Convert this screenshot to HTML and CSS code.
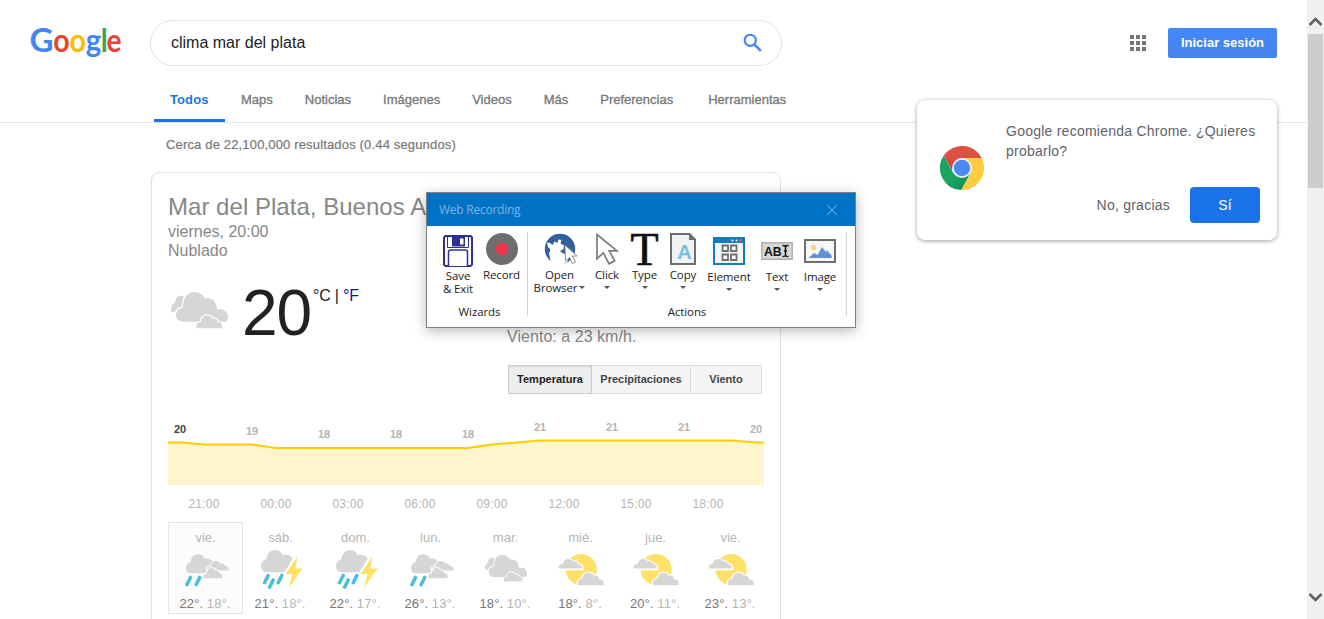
FILE: index.html
```
<!DOCTYPE html>
<html lang="es">
<head>
<meta charset="utf-8">
<title>clima mar del plata</title>
<link rel="stylesheet" href="styles.css">
</head>
<body>
<svg class="defs" width="0" height="0">
  <defs>
    <path id="cloud-big" d="M11 30.800a6.500 6.500 0 0 1-6-7c0-3.500 2.500-6.500 7-7.300C12 7 16.500 1 23 1c6 0 9.500 3 11 6.500 6.500-1 12 3.500 12 11 6-1.200 11 1.500 11 7.500 0 3-1 4.800-2.500 4.800z"/>
    <path id="cloud-small" d="M1 13.200C-.5 12 0 7 4.800 7 5.500 2.500 8 .5 10.800.5c2.700 0 4.600 1.300 5.400 3.200 3-1 5.500 1 5.600 3.700 3.200-.5 5 2 4.200 5.800z"/>
    <path id="cloud-rain" d="M3.500 19.500C1 18.500 0 16.500 0 14.300c0-3.300 2-5.500 4.800-6.200C5 3.500 8 0 12.300 0c3.900 0 6 2.300 6.700 4.600 4-1 7.600.2 8.800 3.200L20.500 19.500z"/>
    <path id="drop" d="M6 1.500 2.400 8.700"/>
    <symbol id="cloudy" viewBox="0 0 57 38">
      <path d="M.5 21.500C-.8 16 1 13 4 11.500 4.200 6.500 7.500 4 12.500 5L11 18z"/>
      <use href="#cloud-big" class="halo"/>
      <use href="#cloud-big"/>
      <use href="#cloud-small" class="halo" transform="translate(25 24)"/>
      <use href="#cloud-small" transform="translate(25 24)"/>
    </symbol>
    <symbol id="rain" viewBox="0 0 48 42">
      <use href="#cloud-rain" transform="translate(5 5.300) scale(.97)"/>
      <use href="#cloud-small" class="halo" transform="translate(25.500 11.700) scale(.85 .75)"/>
      <use href="#cloud-small" transform="translate(25.500 11.700) scale(.85 .75)"/>
      <use href="#cloud-small" class="halo" transform="translate(22.300 18.500) scale(.74 .82)"/>
      <use href="#cloud-small" transform="translate(22.300 18.500) scale(.74 .82)"/>
      <use href="#drop" class="drop" x="3.500" y="27"/><use href="#drop" class="drop" x="12.700" y="27"/>
    </symbol>
    <symbol id="storm" viewBox="0 0 48 42">
      <use href="#cloud-rain" transform="translate(5 1) scale(1.14)"/>
      <path class="bolt-halo" d="M41.500 7 29.500 25h7l-4 14.500 14-20H39.500z"/>
      <path class="bolt" d="M41.500 7 29.500 25h7l-4 14.500 14-20H39.500z"/>
      <use href="#drop" class="drop" x="6.200" y="25"/><use href="#drop" class="drop" x="11.200" y="29.500"/><use href="#drop" class="drop" x="19.800" y="25"/>
    </symbol>
    <symbol id="mostly" viewBox="0 0 48 42">
      <use href="#cloudy" x="4" y="5.200" width="42" height="28"/>
    </symbol>
    <symbol id="partly" viewBox="0 0 48 42">
      <circle class="sun" cx="25.200" cy="20.500" r="15.500"/>
      <path class="cover" d="M0 17h25.500c1.800 0 2.200 1.500 2 2.500v1.800H0z"/>
      <use href="#cloud-small" class="halo" transform="translate(2.300 9.700) scale(.9 .74)"/>
      <use href="#cloud-small" transform="translate(2.300 9.700) scale(.9 .74)"/>
      <use href="#cloud-small" class="halo" transform="translate(21.500 23.200) scale(1 .98)"/>
      <use href="#cloud-small" transform="translate(21.500 23.200) scale(1 .98)"/>
    </symbol>
  </defs>
</svg>

<div class="window">
  <div class="page">
    <header class="header">
      <svg class="logo" width="96" height="36" viewBox="0 0 96 36"><text class="blue" x=".500" y="28" textLength="24" lengthAdjust="spacingAndGlyphs">G</text><text class="red" x="24.200" y="28" textLength="16.500" lengthAdjust="spacingAndGlyphs">o</text><text class="yellow" x="40.400" y="28" textLength="16.500" lengthAdjust="spacingAndGlyphs">o</text><text class="blue" x="56.700" y="28" textLength="15.500" lengthAdjust="spacingAndGlyphs">g</text><text class="green" x="71.800" y="28" textLength="7" lengthAdjust="spacingAndGlyphs">l</text><text class="red" x="77.600" y="28" textLength="15" lengthAdjust="spacingAndGlyphs">e</text></svg>
      <div class="search">
        <span class="query">clima mar del plata</span>
        <svg width="20" height="20" viewBox="0 0 20 20" fill="none" stroke="#4285f4"><circle cx="7.300" cy="7.300" r="5.600" stroke-width="2.100"/><path d="m11.300 11.300 6.500 6.500" stroke-width="2.600"/></svg>
      </div>
      <svg class="apps" width="16" height="16" viewBox="0 0 16 16" fill="#757575"><path d="M0 0h4v4H0zM6 0h4v4H6zM12 0h4v4h-4zM0 6h4v4H0zM6 6h4v4H6zM12 6h4v4h-4zM0 12h4v4H0zM6 12h4v4H6zM12 12h4v4h-4z"/></svg>
      <span class="signin">Iniciar sesión</span>
    </header>
    <nav class="tabs">
      <span class="tab active">Todos</span><span class="tab">Maps</span><span class="tab">Noticias</span><span class="tab">Imágenes</span><span class="tab">Videos</span><span class="tab">Más</span><span class="tab">Preferencias</span><span class="tab tools">Herramientas</span>
    </nav>
    <p class="stats">Cerca de 22,100,000 resultados (0.44 segundos)</p>
    <section class="card">
      <h1>Mar del Plata, Buenos Aires</h1>
      <p class="sub">viernes, 20:00</p>
      <p class="sub">Nublado</p>
      <div class="now">
        <svg class="now-icon wx" width="57" height="38"><use href="#cloudy" width="57" height="38"/></svg>
        <span class="temp">20</span>
        <span class="units">°C | <span class="link">°F</span></span>
        <span class="wind">Viento: a 23 km/h.</span>
      </div>
      <div class="modes"><span class="mode on">Temperatura</span><span class="mode precip">Precipitaciones</span><span class="mode wind-mode">Viento</span></div>
      <svg class="chart" width="596" height="100" viewBox="0 0 596 100">
        <path class="area" d="M0 27.500h13l24 2h47l24 3.500h192l24-3.500 48-4h192l24 2h8V70H0z"/>
        <path class="line" d="M0 27.500h13l24 2h47l24 3.500h192l24-3.500 48-4h192l24 2h8"/>
        <g class="values"><text class="first" x="12" y="18">20</text><text x="84" y="20">19</text><text x="156" y="23">18</text><text x="228" y="23">18</text><text x="300" y="23">18</text><text x="372" y="16">21</text><text x="444" y="16">21</text><text x="516" y="16">21</text><text x="588" y="18">20</text></g>
        <g class="hours"><text x="36" y="93">21:00</text><text x="108" y="93">00:00</text><text x="180" y="93">03:00</text><text x="252" y="93">06:00</text><text x="324" y="93">09:00</text><text x="396" y="93">12:00</text><text x="468" y="93">15:00</text><text x="540" y="93">18:00</text></g>
      </svg>
      <div class="days">
        <div class="day selected"><span>vie.</span><svg class="wx" width="48" height="42"><use href="#rain"/></svg><p><b>22°.</b> 18°.</p></div>
        <div class="day"><span>sáb.</span><svg class="wx" width="48" height="42"><use href="#storm"/></svg><p><b>21°.</b> 18°.</p></div>
        <div class="day"><span>dom.</span><svg class="wx" width="48" height="42"><use href="#storm"/></svg><p><b>22°.</b> 17°.</p></div>
        <div class="day"><span>lun.</span><svg class="wx" width="48" height="42"><use href="#rain"/></svg><p><b>26°.</b> 13°.</p></div>
        <div class="day"><span>mar.</span><svg class="wx" width="48" height="42"><use href="#mostly"/></svg><p><b>18°.</b> 10°.</p></div>
        <div class="day"><span>mié.</span><svg class="wx" width="48" height="42"><use href="#partly"/></svg><p><b>18°.</b> 8°.</p></div>
        <div class="day"><span>jue.</span><svg class="wx" width="48" height="42"><use href="#partly"/></svg><p><b>20°.</b> 11°.</p></div>
        <div class="day"><span>vie.</span><svg class="wx" width="48" height="42"><use href="#partly"/></svg><p><b>23°.</b> 13°.</p></div>
      </div>
    </section>
  </div>
  <div class="scrollbar">
    <svg width="17" height="34" viewBox="0 0 17 34"><path d="M2.500 25 8.500 19l6 6" fill="none" stroke="#606060" stroke-width="2.600"/></svg>
    <div class="thumb"></div>
    <svg class="down" width="17" height="34" viewBox="0 0 17 34"><path d="m2.500 9 6 6 6-6" fill="none" stroke="#606060" stroke-width="2.600"/></svg>
  </div>
</div>

<aside class="promo">
  <svg class="chrome" width="44" height="44" viewBox="0 0 44 44">
    <defs>
      <linearGradient id="shade-g" x1="0" y1="0" x2="1" y2="1"><stop offset=".5" stop-color="#1da462"/><stop offset="1" stop-color="#0f8a4c"/></linearGradient>
      <linearGradient id="shade-r" x1="0" y1="1" x2=".6" y2="0"><stop offset="0" stop-color="#b53a30"/><stop offset=".45" stop-color="#dd5144"/></linearGradient>
    </defs>
    <path d="M22 12h19.600A22 22 0 0 1 21.200 44l10-17z" fill="#ffcd42"/>
    <path d="M3.800 9.600 13.400 27 30.600 27 21.200 44A22 22 0 0 1 3.800 9.600z" fill="url(#shade-g)"/>
    <path d="M3.800 9.600A22 22 0 0 1 41.600 12H22L12 24z" fill="url(#shade-r)"/>
    <circle cx="22" cy="22" r="10" fill="#f1f1f1"/><circle cx="22" cy="22" r="8.200" fill="#4a8af4"/>
  </svg>
  <div class="promo-body">
    <p>Google recomienda Chrome. ¿Quieres probarlo?</p>
    <div class="promo-actions"><span class="no">No, gracias</span><span class="yes">Sí</span></div>
  </div>
</aside>

<div class="dialog">
  <div class="titlebar"><span>Web Recording</span><svg width="12" height="12" viewBox="0 0 12 12"><path d="m.8.8 10.400 10.400M11.200.8.8 11.200" stroke="#7fb8e3" fill="none"/></svg></div>
  <div class="ribbon">
    <div class="group wizards">
      <div class="tools-row">
        <div class="tool save low"><svg width="30" height="32" viewBox="0 0 30 32"><path d="M1 2.500 2.500 1h25L29 2.500v27L27.500 31h-25L1 29.500z" fill="#fff" stroke="#2e3192" stroke-width="2"/><path d="M4.500 2v10.500h21V2" fill="none" stroke="#2e3192" stroke-width="1"/><path d="M9 1h13v10.500H9z" fill="#2e3192"/><path d="M17 3.500h3.500v6H17z" fill="#fff"/><path d="M5.500 31V17q0-2 2-2h15q2 0 2 2v14" fill="#fff" stroke="#2e3192" stroke-width="1.500"/></svg><span>Save</span><span>&amp; Exit</span></div>
        <div class="tool record"><svg width="32" height="32" viewBox="0 0 32 32"><circle cx="16" cy="16" r="16" fill="#6d6e70"/><circle cx="16" cy="16" r="6.200" fill="#f0364d"/></svg><span>Record</span></div>
      </div>
      <div class="group-name">Wizards</div>
    </div>
    <div class="group actions">
      <div class="tools-row">
        <div class="tool open"><svg width="34" height="32" viewBox="0 0 34 32"><circle cx="17" cy="16" r="15.200" fill="#335f9e"/><path d="M4 9.500 7 10l2.500 2 2-3.500 3 1.500 1-3.500 3 .5-1 3.500 3.500 2-.5 3.500-3.500 2 3 2.500 3 .5 2.500 3.500-1 4-4 2.500-4 1-5-.5-4-3.500L6 20.500l1.500-4L5 14z" fill="#fff"/><path d="m22 12 .5 16 4-3.500 3 6 3-1.500-3-6h4.500z" fill="#fff" stroke="#888" stroke-width=".9"/></svg><span>Open</span><span>Browser<i class="arrow side"></i></span></div>
        <div class="tool click"><svg width="26" height="32" viewBox="0 0 26 32"><path d="M3 1.500v24.300l6.300-6 5.700 11 5.700-3-5.500-10H23z" fill="#fff" stroke="#7a7b7d" stroke-width="1.700"/></svg><span>Click</span><i class="arrow"></i></div>
        <div class="tool type"><div class="glyph">T</div><span>Type</span><i class="arrow"></i></div>
        <div class="tool copy"><svg width="26" height="32" viewBox="0 0 26 32"><path d="M1 1h18.500L25 6.500V31H1z" fill="#f2f2f2" stroke="#6d6e70" stroke-width="2"/><path d="M19 1v6h6z" fill="#6d6e70"/><text class="copy-letter" x="14.500" y="26" text-anchor="middle">A</text></svg><span>Copy</span><i class="arrow"></i></div>
        <div class="tool element low"><svg width="32" height="30" viewBox="0 0 32 30"><path d="M0 2h32v28H0z" fill="#127cbd"/><path d="M2 8h28v20H2z" fill="#f5f5f5"/><path d="M9.500 10.500H15V16H9.500zM18 10.500h5.500V16H18zM9.500 19.500H15V25H9.500zM18 19.500h5.500V25H18z" fill="#fff" stroke="#6d6e70" stroke-width="1.800"/><circle cx="19.500" cy="5.500" r="1" fill="#fff"/><circle cx="23.500" cy="5.500" r="1" fill="#fff"/><circle cx="27.500" cy="5.500" r="1.400" fill="#f0566b"/></svg><span>Element</span><i class="arrow"></i></div>
        <div class="tool text low"><svg width="32" height="30" viewBox="0 0 32 30"><path d="M.8 7.800h30.400v16.400H.8z" fill="#d7d7d7" stroke="#b0b1a9" stroke-width="1.500"/><text class="ab" x="3" y="20.500" textLength="17.500" lengthAdjust="spacingAndGlyphs">AB</text><path d="M21.500 10.500q2.500 0 3 1 .5-1 3-1M24.500 11v10M21.500 21.500q2.500 0 3-1 .5 1 3 1M23 16h3" fill="none" stroke="#111" stroke-width="1.500"/></svg><span>Text</span><i class="arrow"></i></div>
        <div class="tool image low"><svg width="32" height="30" viewBox="0 0 32 30"><path d="M1 5h30v22H1z" fill="#f7f7f7" stroke="#6d6e70" stroke-width="2"/><circle cx="9.500" cy="12.500" r="2.800" fill="#f1d775"/><path d="m4.500 23 5.500-5 3.500 2 4.500-8 4 5 1.500-2 2 4 1-1L28 23z" fill="#6490cd"/></svg><span>Image</span><i class="arrow"></i></div>
      </div>
      <div class="group-name">Actions</div>
    </div>
  </div>
</div>
</body>
</html>
```

FILE: styles.css
```
* { box-sizing: border-box; }
body { margin: 0; width: 1324px; height: 619px; overflow: hidden; background: #fff; font-family: "Liberation Sans", Arial, sans-serif; color: #222; }
h1, p { margin: 0; font-weight: normal; }
svg { display: block; flex: none; }
.defs { position: absolute; }
.window { display: flex; height: 619px; }
.page { width: 1307px; height: 619px; overflow: hidden; }

.header { display: flex; align-items: flex-start; height: 76px; padding: 20px 30px 0 29px; }
.logo { margin: 4px 25px 0 0; overflow: visible; }
.logo text { font: 700 32px Lato, sans-serif; }
.blue { fill: #4285f4; }
.red { fill: #ea4335; }
.yellow { fill: #fbbc05; }
.green { fill: #34a853; }
.search { display: flex; align-items: center; justify-content: space-between; width: 632px; height: 46px; padding: 0 18px 0 20px; border: 1px solid #dfe1e5; border-radius: 23px; }
.query { font-size: 16px; }
.apps { margin: 15px 22px 0 auto; }
.signin { width: 109px; height: 30px; margin-top: 8px; border-radius: 2px; background: linear-gradient(#4387fd, #4683ea); color: #fff; font-weight: bold; font-size: 13px; line-height: 30px; text-align: center; }

.tabs { display: flex; height: 47px; padding-left: 154px; border-bottom: 1px solid #e6e6e6; }
.tab { height: 46px; padding: 0 16px; font-size: 13px; line-height: 47px; color: #777; -webkit-text-stroke: .3px #777; white-space: nowrap; }
.tab.active { width: 71px; border-bottom: 3px solid #1a73e8; color: #1a73e8; font-weight: bold; letter-spacing: .1px; -webkit-text-stroke: 0; }
.tools { margin-left: 3px; }
.stats { height: 49px; padding-left: 166px; font-size: 13px; line-height: 43px; color: #777; letter-spacing: .16px; -webkit-text-stroke: .2px #777; }

.card { width: 630px; height: 470px; margin-left: 151px; padding: 19px 16px 20px; border: 1px solid #dfe1e5; border-radius: 8px; }
h1 { height: 30px; font-size: 24px; line-height: 29px; color: #878787; white-space: nowrap; letter-spacing: .03px; }
.sub { height: 19px; font-size: 16px; line-height: 19px; color: #878787; }
.now { display: flex; align-items: flex-start; height: 105px; }
.now-icon { margin: 31px 0 0 3px; }
.temp { width: 71px; margin: 17px 0 0 14px; font-size: 64px; line-height: 73px; letter-spacing: -1px; }
.units { width: 194px; margin-top: 26px; font-size: 16px; line-height: 20px; letter-spacing: -.2px; }
.link { color: #1a0dab; }
.wind { margin-top: 67px; font-size: 16px; line-height: 20px; letter-spacing: .04px; color: #878787; white-space: nowrap; }
.wx { fill: #d6d6d6; }
.halo { stroke: #fff; stroke-width: 2.400; fill: #fff; }
.cover { fill: #fff; }
.drop { stroke: #4bbfd8; stroke-width: 3.600; stroke-linecap: round; }
.sun, .bolt { fill: #ffe168; }
.bolt-halo { fill: #fff; stroke: #fff; stroke-width: 2.600; }

.modes { display: flex; width: 254px; margin-left: 340px; font-size: 11px; font-weight: bold; line-height: 27px; text-align: center; color: #444; }
.mode { height: 29px; border: 1px solid #dcdcdc; background: #f5f5f5; }
.mode.on { width: 84px; border-color: #ccc; background: #eee; box-shadow: inset 0 1px 2px rgba(0,0,0,.1); color: #222; }
.precip { width: 99px; border-left: 0; }
.wind-mode { width: 71px; border-left: 0; }

.chart { margin-top: 21px; }
.area { fill: #fff5cc; }
.line { fill: none; stroke: #fc0; stroke-width: 2; }
.values, .hours { text-anchor: middle; fill: #b5b5b5; }
.values { font-size: 11px; font-weight: bold; }
.values .first { fill: #444; }
.hours { font-size: 12px; letter-spacing: .2px; }
.days { display: flex; margin-top: 7px; }
.day { display: flex; flex-direction: column; align-items: center; width: 75px; height: 92px; padding-top: 6px; border: 1px solid transparent; flex: none; font-size: 13px; line-height: 18px; color: #b5b5b5; }
.day.selected { border-color: #e5e5e5; background: #fcfcfc; }
.day > svg { margin: 2px 2px 4px 0; }
.day p { margin-right: 1px; white-space: nowrap; letter-spacing: .1px; }
.day b { font-weight: normal; color: #777; }

.scrollbar { display: flex; flex-direction: column; width: 17px; height: 619px; background: #f0f0f0; }
.thumb { width: 15px; height: 154px; margin-left: 1px; background: #cdcdcd; }
.down { margin-top: auto; }

.promo { position: absolute; left: 917px; top: 100px; display: flex; width: 360px; height: 140px; padding: 21px 17px 17px 23px; border-radius: 8px; background: #fff; box-shadow: 0 1px 4px rgba(0,0,0,.38); }
.chrome { margin: 25px 22px 0 0; }
.promo-body { flex: 1; color: #5f6368; font-size: 14px; line-height: 20px; letter-spacing: .24px; }
.promo-actions { display: flex; justify-content: flex-end; align-items: center; margin-top: 26px; }
.no { margin-right: 20px; }
.yes { width: 70px; height: 36px; border-radius: 4px; background: #1a73e8; color: #fff; line-height: 36px; text-align: center; }

.dialog { position: absolute; left: 426px; top: 192px; width: 430px; height: 136px; border: 1px solid #7d8185; background: #fff; box-shadow: 0 3px 12px rgba(0,0,0,.28); font-family: "Open Sans", "Noto Sans", sans-serif; color: #222; }
.titlebar { display: flex; align-items: center; justify-content: space-between; height: 33px; padding: 0 17px 0 12px; background: #0072c6; color: #7ab4e2; font-size: 12px; letter-spacing: -.25px; }
.ribbon { display: flex; padding-top: 6px; }
.group { height: 84px; border-right: 1px solid #d2d2d2; }
.wizards { width: 101px; padding-left: 5px; }
.actions { width: 319px; }
.tools-row { display: flex; height: 72px; }
.tool { display: flex; flex-direction: column; align-items: center; flex: none; padding-top: 1px; font-size: 11.500px; line-height: 13px; letter-spacing: -.1px; white-space: nowrap; }
.tool.low { padding-top: 3px; }
.tool > svg, .glyph { margin-bottom: 3px; }
.save { width: 38px; margin-left: 7px; }
.save.low > svg { margin-bottom: 2px; }
.record { width: 49px; }
.open { width: 63px; }
.click { width: 32px; }
.copy { width: 34px; }
.type { width: 43px; }
.element { width: 58px; }
.text { width: 38px; }
.image { width: 48px; }
.low:not(.save) > svg { margin-bottom: 5px; }
.arrow { width: 0; height: 0; margin-top: 5px; border: 3px solid transparent; border-top-color: #555; border-bottom: 0; }
.arrow.side { display: inline-block; margin: 0 0 3px 2px; }
.glyph { height: 32px; font: 46px/33px "Liberation Serif", serif; color: #111; -webkit-text-stroke: .700px #111; }
.copy-letter { font: bold 20px "Liberation Sans", sans-serif; fill: #79bfe4; }
.ab { font: bold 13px "Liberation Sans", sans-serif; fill: #111; }
.group-name { font-size: 11.500px; line-height: 16px; letter-spacing: -.1px; text-align: center; }
```
